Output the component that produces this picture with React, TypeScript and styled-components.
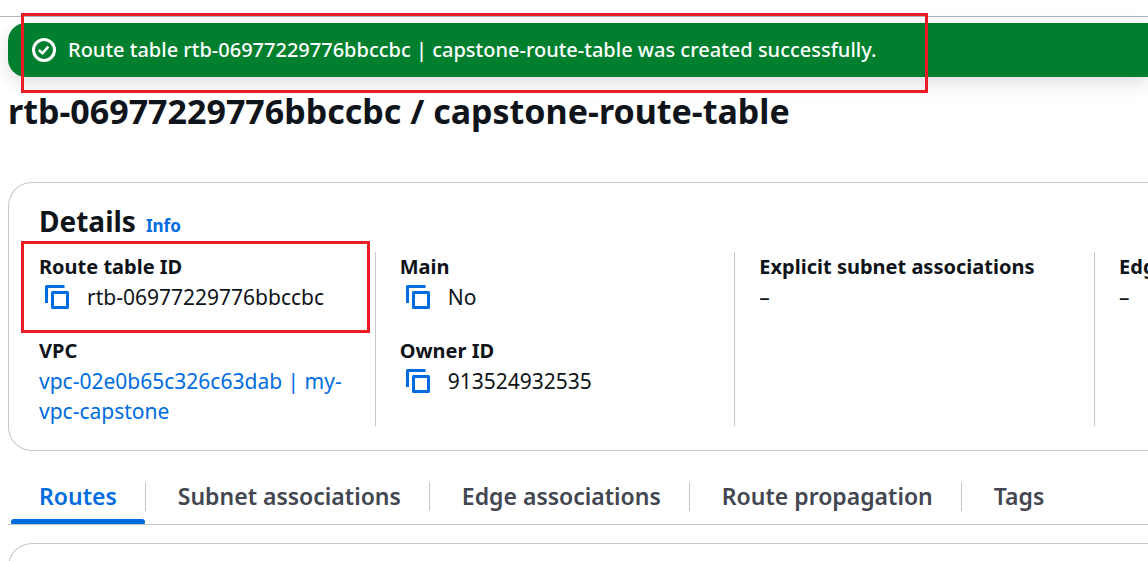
import React from "react";
import styled, { createGlobalStyle } from "styled-components";

const GlobalStyle = createGlobalStyle`
  * { box-sizing: border-box; }
  body {
    margin: 0;
    background: #fff;
    color: #0f141a;
    font-family: "Noto Sans", "Open Sans", sans-serif;
    font-size: 21px;
    line-height: 30px;
  }
`;

const Page = styled.div`
  height: 100vh;
  overflow: hidden;
`;

const TopBar = styled.header`
  height: 17px;
  border-bottom: 1px solid #b4b4bb;
`;

const Main = styled.main`
  padding: 6px 0 0 8px;
`;

const Flash = styled.div`
  display: flex;
  padding: 12px 24px;
  border-radius: 18px 0 0 18px;
  background: #00802f;
  color: #fff;
  box-shadow: 0 6px 18px 1px rgba(0, 7, 22, 0.12);
`;

const FlashMessage = styled.div`
  position: relative;
  display: flex;
  align-items: center;
  gap: 12px;
  font-size: 20px;
  font-weight: 500;
  white-space: nowrap;
`;

const Highlight = styled.div<{ $top: number; $right: number; $bottom: number; $left: number }>`
  position: absolute;
  z-index: 2;
  top: ${(p) => p.$top}px;
  right: ${(p) => p.$right}px;
  bottom: ${(p) => p.$bottom}px;
  left: ${(p) => p.$left}px;
  border: 3px solid #ed1c24;
  pointer-events: none;
`;

const Title = styled.h1`
  position: relative;
  margin: 10px 0 47px;
  font-size: 34px;
  line-height: 48px;
  font-weight: 700;
  white-space: nowrap;
`;

const Card = styled.section`
  border: 1px solid #c6c6cd;
  border-right: 0;
  border-radius: 24px 0 0 24px;
`;

const DetailsCard = styled(Card)`
  padding: 20px 0 24px 6px;
`;

const CardHeader = styled.div`
  display: flex;
  align-items: baseline;
  gap: 10px;
  padding-left: 24px;
  margin-bottom: 11px;
`;

const CardTitle = styled.h2`
  margin: 0;
  font-size: 28px;
  line-height: 36px;
  font-weight: 700;
`;

const Link = styled.a`
  color: #006ce0;
  text-decoration: none;
`;

const InfoLink = styled(Link)`
  font-size: 17px;
  font-weight: 700;
`;

const Columns = styled.div`
  display: grid;
  grid-template-columns: repeat(3, minmax(0, 20fr)) minmax(0, 3fr);
`;

const Column = styled.dl`
  display: flex;
  flex-direction: column;
  gap: 24px;
  margin: 0;
  padding-left: 24px;
  border-left: 1px solid #c6c6cd;

  &:first-child {
    border-left: 0;
    padding-right: 12px;
  }
`;

const Field = styled.div`
  position: relative;
`;

const Label = styled.dt`
  font-size: 20px;
  font-weight: 700;
  white-space: nowrap;
`;

const Value = styled.dd`
  display: flex;
  align-items: center;
  margin: 0;
`;

const CopyButton = styled.button`
  display: flex;
  margin: 0 18px 0 6px;
  padding: 0;
  border: 0;
  background: none;
  color: #006ce0;
  cursor: pointer;
`;

const TabBar = styled.div`
  display: flex;
  align-items: stretch;
  padding: 18px 0 0 3px;
  border-bottom: 1px solid #c6c6cd;
  margin-bottom: 18px;
`;

const TabItem = styled.div`
  display: flex;
  flex-direction: column;
  justify-content: space-between;
  height: 55px;
`;

const Tab = styled.button<{ $active?: boolean }>`
  padding: 12px 28px 8px;
  border: 0;
  background: none;
  color: ${(p) => (p.$active ? "#006ce0" : "#424650")};
  font: inherit;
  font-size: 23px;
  font-weight: 600;
  white-space: nowrap;
  cursor: pointer;
`;

const TabMarker = styled.span`
  height: 5px;
  border-radius: 3px 3px 1px 1px;
  background: #006ce0;
`;

const Divider = styled.span`
  width: 1px;
  height: 29px;
  margin: 13px 4px 0 0;
  background: #c6c6cd;
`;

const RoutesCard = styled(Card)`
  height: 120px;
`;

const CheckIcon = () => (
  <svg width="24" height="24" viewBox="0 0 16 16" fill="none" stroke="currentColor" strokeWidth="2" aria-hidden="true">
    <circle cx="8" cy="8" r="7" />
    <path d="m4.6 8 2.4 2.2 3.9-4.4" strokeWidth="1.7" />
  </svg>
);

const CopyIcon = () => (
  <svg width="24" height="24" viewBox="0 0 16 16" fill="none" stroke="currentColor" strokeWidth="2" strokeLinejoin="round" aria-hidden="true">
    <path d="M1 12V1h12" />
    <path d="M5 5h10v10H5z" />
  </svg>
);

const Copyable = ({ label, value }: { label: string; value: string }) => (
  <Value>
    <CopyButton type="button" aria-label={`Copy ${label}`}>
      <CopyIcon />
    </CopyButton>
    {value}
  </Value>
);

const tabs = ["Routes", "Subnet associations", "Edge associations", "Route propagation", "Tags"];

export default function App() {
  const [active, setActive] = React.useState("Routes");
  return (
    <Page>
      <GlobalStyle />
      <TopBar />
      <Main>
        <Flash role="status">
          <FlashMessage>
            <CheckIcon />
            Route table rtb-06977229776bbccbc | capstone-route-table was created successfully.
            <Highlight $top={-22} $right={-52} $bottom={-28} $left={-11} />
          </FlashMessage>
        </Flash>
        <Title>rtb-06977229776bbccbc / capstone-route-table</Title>
        <DetailsCard>
          <CardHeader>
            <CardTitle>Details</CardTitle>
            <InfoLink href="#info">Info</InfoLink>
          </CardHeader>
          <Columns>
            <Column>
              <Field>
                <Label>Route table ID</Label>
                <Copyable label="route table ID" value="rtb-06977229776bbccbc" />
                <Highlight $top={-11} $right={-7} $bottom={-21} $left={-18} />
              </Field>
              <Field>
                <Label>VPC</Label>
                <Value>
                  <Link href="#vpc">vpc-02e0b65c326c63dab | my-vpc-capstone</Link>
                </Value>
              </Field>
            </Column>
            <Column>
              <Field>
                <Label>Main</Label>
                <Copyable label="main" value="No" />
              </Field>
              <Field>
                <Label>Owner ID</Label>
                <Copyable label="owner ID" value="913524932535" />
              </Field>
            </Column>
            <Column>
              <Field>
                <Label>Explicit subnet associations</Label>
                <Value>–</Value>
              </Field>
            </Column>
            <Column>
              <Field>
                <Label>Edge associations</Label>
                <Value>–</Value>
              </Field>
            </Column>
          </Columns>
        </DetailsCard>
        <TabBar role="tablist">
          {tabs.map((name, i) => (
            <React.Fragment key={name}>
              {i > 0 && <Divider />}
              <TabItem>
                <Tab type="button" role="tab" aria-selected={name === active} $active={name === active} onClick={() => setActive(name)}>
                  {name}
                </Tab>
                {name === active && <TabMarker />}
              </TabItem>
            </React.Fragment>
          ))}
        </TabBar>
        <RoutesCard aria-label="Routes" />
      </Main>
    </Page>
  );
}
